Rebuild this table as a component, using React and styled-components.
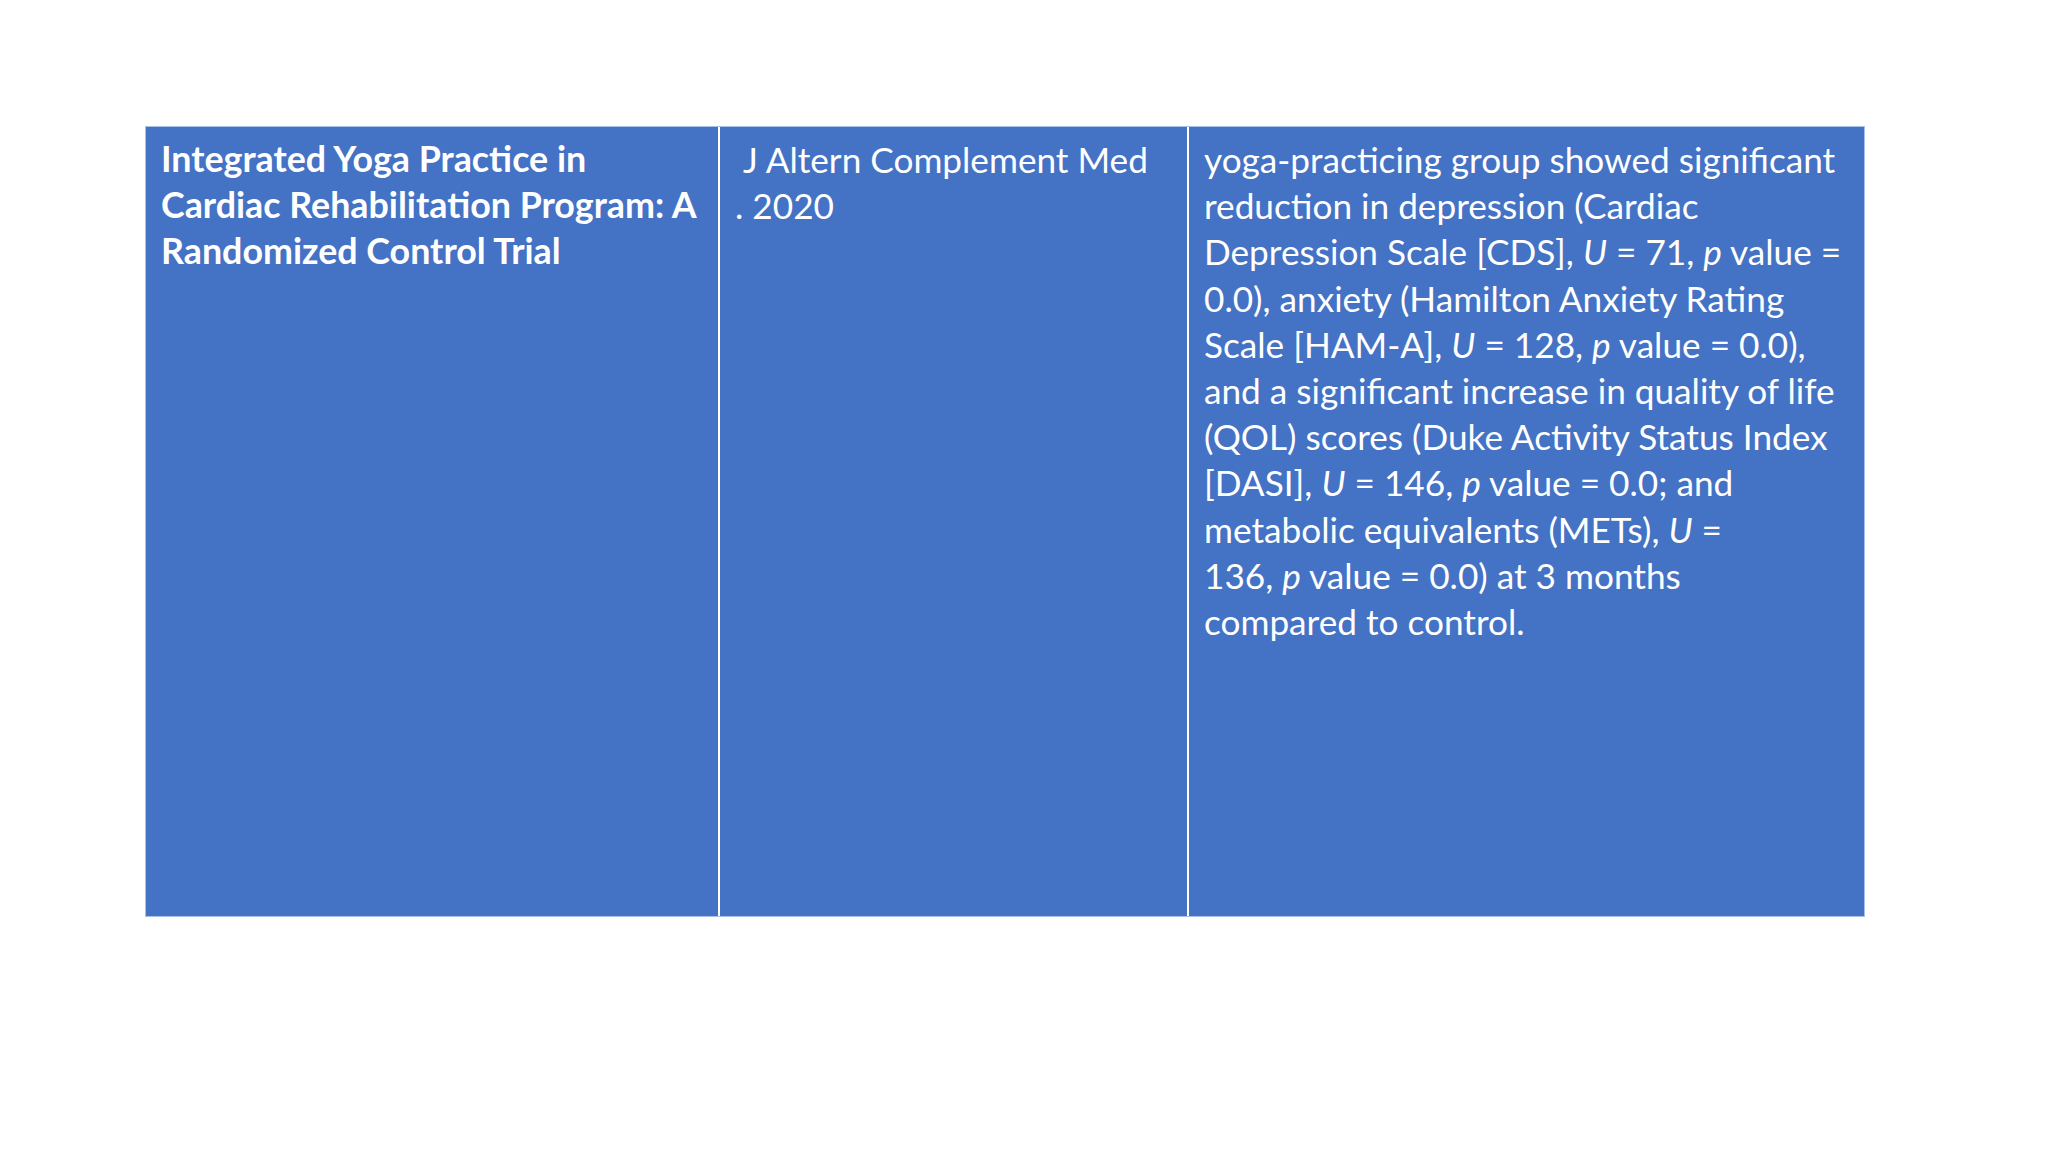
import React from "react";
import styled, { createGlobalStyle } from "styled-components";

const Global = createGlobalStyle`
  html, body { margin: 0; padding: 0; background: #ffffff; }
  body { font-family: "Lato", "Open Sans", sans-serif; }
`;

const Page = styled.div`
  width: 2048px;
  height: 1152px;
  background: #ffffff;
  padding: 127px 0 0 146px;
  box-sizing: border-box;
`;

const Table = styled.div`
  display: grid;
  grid-template-columns: 572px 469px 677px;
  height: 789px;
  width: 1718px;
  background: #4472c4;
  box-shadow: 0 0 0 1px #a9c1ea;
`;

const Cell = styled.div`
  box-sizing: border-box;
  padding: 9px 6px 0 15px;
  border-left: ${(p) => (p.$first ? "none" : "2px solid #ffffff")};
  color: #ffffff;
  font-family: "Lato", "Open Sans", sans-serif;
  font-size: ${(p) => (p.$bold ? "35.8px" : "35.2px")};
  line-height: 46.2px;
  font-weight: ${(p) => (p.$bold ? 700 : 400)};
`;

const Line = styled.div`
  white-space: pre;
`;

const I = styled.i`
  font-style: italic;
`;

export default function App() {
  return (
    <>
      <Global />
      <Page>
        <Table>
          <Cell $first $bold>
            <Line>Integrated Yoga Practice in</Line>
            <Line>Cardiac Rehabilitation Program: A</Line>
            <Line>Randomized Control Trial</Line>
          </Cell>
          <Cell>
            <Line> J Altern Complement Med</Line>
            <Line>. 2020</Line>
          </Cell>
          <Cell>
            <Line>yoga-practicing group showed significant</Line>
            <Line>reduction in depression (Cardiac</Line>
            <Line>
              Depression Scale [CDS], <I>U</I> = 71, <I>p</I> value =
            </Line>
            <Line>0.0), anxiety (Hamilton Anxiety Rating</Line>
            <Line>
              Scale [HAM-A], <I>U</I> = 128, <I>p</I> value = 0.0),
            </Line>
            <Line>and a significant increase in quality of life</Line>
            <Line>(QOL) scores (Duke Activity Status Index</Line>
            <Line>
              [DASI], <I>U</I> = 146, <I>p</I> value = 0.0; and
            </Line>
            <Line>
              metabolic equivalents (METs), <I>U</I> =
            </Line>
            <Line>
              136, <I>p</I> value = 0.0) at 3 months
            </Line>
            <Line>compared to control.</Line>
          </Cell>
        </Table>
      </Page>
    </>
  );
}
